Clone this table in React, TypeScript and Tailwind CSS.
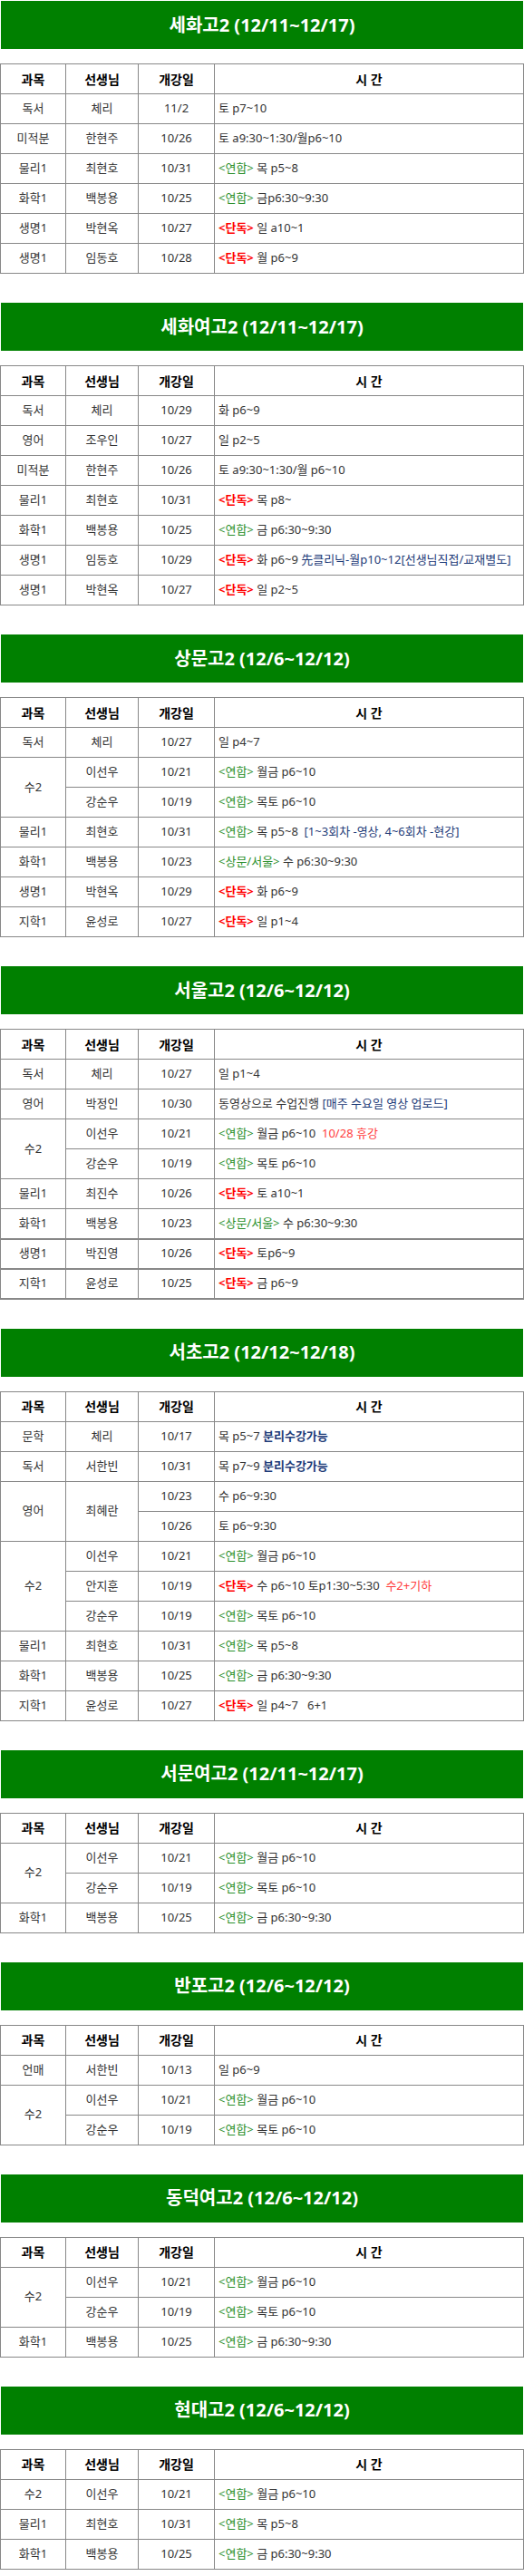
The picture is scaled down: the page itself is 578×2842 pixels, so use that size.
import type { ReactNode } from 'react';

// tags used in the time column
const Y = () => <span className="text-[#2b8f2b]">&lt;연합&gt;</span>;
const D = () => <span className="font-bold text-[#ff0000]">&lt;단독&gt;</span>;
const SM = () => <span className="text-[#2b8f2b]">&lt;상문/서울&gt;</span>;
const N = ({ children, bold }: { children: ReactNode; bold?: boolean }) => (
    <span className={bold ? 'font-bold text-[#1d3b78]' : 'text-[#1d3b78]'}>{children}</span>
);
const R = ({ children }: { children: ReactNode }) => <span className="text-[#ff3c3c]">{children}</span>;

type Row = {
    subj?: string;
    subjSpan?: number;
    teacher?: string;
    teacherSpan?: number;
    date: string;
    time: ReactNode;
    thick?: boolean;
};

type Section = { title: string; rows: Row[] };

const sections: Section[] = [
    {
        title: '세화고2 (12/11~12/17)',
        rows: [
            { subj: '독서', teacher: '체리', date: '11/2', time: '토 p7~10' },
            { subj: '미적분', teacher: '한현주', date: '10/26', time: '토 a9:30~1:30/월p6~10' },
            { subj: '물리1', teacher: '최현호', date: '10/31', time: <><Y /> 목 p5~8</> },
            { subj: '화학1', teacher: '백봉용', date: '10/25', time: <><Y /> 금p6:30~9:30</> },
            { subj: '생명1', teacher: '박현옥', date: '10/27', time: <><D /> 일 a10~1</> },
            { subj: '생명1', teacher: '임동호', date: '10/28', time: <><D /> 월 p6~9</> },
        ],
    },
    {
        title: '세화여고2 (12/11~12/17)',
        rows: [
            { subj: '독서', teacher: '체리', date: '10/29', time: '화 p6~9' },
            { subj: '영어', teacher: '조우인', date: '10/27', time: '일 p2~5' },
            { subj: '미적분', teacher: '한현주', date: '10/26', time: '토 a9:30~1:30/월 p6~10' },
            { subj: '물리1', teacher: '최현호', date: '10/31', time: <><D /> 목 p8~</> },
            { subj: '화학1', teacher: '백봉용', date: '10/25', time: <><Y /> 금 p6:30~9:30</> },
            {
                subj: '생명1',
                teacher: '임동호',
                date: '10/29',
                time: (
                    <>
                        <D /> 화 p6~9 <N>先클리닉-월p10~12[선생님직접/교재별도]</N>
                    </>
                ),
            },
            { subj: '생명1', teacher: '박현옥', date: '10/27', time: <><D /> 일 p2~5</> },
        ],
    },
    {
        title: '상문고2 (12/6~12/12)',
        rows: [
            { subj: '독서', teacher: '체리', date: '10/27', time: '일 p4~7' },
            { subj: '수2', subjSpan: 2, teacher: '이선우', date: '10/21', time: <><Y /> 월금 p6~10</> },
            { teacher: '강순우', date: '10/19', time: <><Y /> 목토 p6~10</> },
            {
                subj: '물리1',
                teacher: '최현호',
                date: '10/31',
                time: (
                    <>
                        <Y /> 목 p5~8 &nbsp;<N>[1~3회차 -영상, 4~6회차 -현강]</N>
                    </>
                ),
            },
            { subj: '화학1', teacher: '백봉용', date: '10/23', time: <><SM /> 수 p6:30~9:30</> },
            { subj: '생명1', teacher: '박현옥', date: '10/29', time: <><D /> 화 p6~9</> },
            { subj: '지학1', teacher: '윤성로', date: '10/27', time: <><D /> 일 p1~4</> },
        ],
    },
    {
        title: '서울고2 (12/6~12/12)',
        rows: [
            { subj: '독서', teacher: '체리', date: '10/27', time: '일 p1~4' },
            {
                subj: '영어',
                teacher: '박정인',
                date: '10/30',
                time: (
                    <>
                        동영상으로 수업진행 <N>[매주 수요일 영상 업로드]</N>
                    </>
                ),
            },
            {
                subj: '수2',
                subjSpan: 2,
                teacher: '이선우',
                date: '10/21',
                time: (
                    <>
                        <Y /> 월금 p6~10 &nbsp;<R>10/28 휴강</R>
                    </>
                ),
            },
            { teacher: '강순우', date: '10/19', time: <><Y /> 목토 p6~10</> },
            { subj: '물리1', teacher: '최진수', date: '10/26', time: <><D /> 토 a10~1</> },
            { subj: '화학1', teacher: '백봉용', date: '10/23', time: <><SM /> 수 p6:30~9:30</>, thick: true },
            { subj: '생명1', teacher: '박진영', date: '10/26', time: <><D /> 토p6~9</>, thick: true },
            { subj: '지학1', teacher: '윤성로', date: '10/25', time: <><D /> 금 p6~9</>, thick: true },
        ],
    },
    {
        title: '서초고2 (12/12~12/18)',
        rows: [
            { subj: '문학', teacher: '체리', date: '10/17', time: <>목 p5~7 <N bold>분리수강가능</N></> },
            { subj: '독서', teacher: '서한빈', date: '10/31', time: <>목 p7~9 <N bold>분리수강가능</N></> },
            { subj: '영어', subjSpan: 2, teacher: '최혜란', teacherSpan: 2, date: '10/23', time: '수 p6~9:30' },
            { date: '10/26', time: '토 p6~9:30' },
            { subj: '수2', subjSpan: 3, teacher: '이선우', date: '10/21', time: <><Y /> 월금 p6~10</> },
            {
                teacher: '안지훈',
                date: '10/19',
                time: (
                    <>
                        <D /> 수 p6~10 토p1:30~5:30 &nbsp;<R>수2+기하</R>
                    </>
                ),
            },
            { teacher: '강순우', date: '10/19', time: <><Y /> 목토 p6~10</> },
            { subj: '물리1', teacher: '최현호', date: '10/31', time: <><Y /> 목 p5~8</> },
            { subj: '화학1', teacher: '백봉용', date: '10/25', time: <><Y /> 금 p6:30~9:30</> },
            { subj: '지학1', teacher: '윤성로', date: '10/27', time: <><D /> 일 p4~7 &nbsp; 6+1</> },
        ],
    },
    {
        title: '서문여고2 (12/11~12/17)',
        rows: [
            { subj: '수2', subjSpan: 2, teacher: '이선우', date: '10/21', time: <><Y /> 월금 p6~10</> },
            { teacher: '강순우', date: '10/19', time: <><Y /> 목토 p6~10</> },
            { subj: '화학1', teacher: '백봉용', date: '10/25', time: <><Y /> 금 p6:30~9:30</> },
        ],
    },
    {
        title: '반포고2 (12/6~12/12)',
        rows: [
            { subj: '언매', teacher: '서한빈', date: '10/13', time: '일 p6~9' },
            { subj: '수2', subjSpan: 2, teacher: '이선우', date: '10/21', time: <><Y /> 월금 p6~10</> },
            { teacher: '강순우', date: '10/19', time: <><Y /> 목토 p6~10</> },
        ],
    },
    {
        title: '동덕여고2 (12/6~12/12)',
        rows: [
            { subj: '수2', subjSpan: 2, teacher: '이선우', date: '10/21', time: <><Y /> 월금 p6~10</> },
            { teacher: '강순우', date: '10/19', time: <><Y /> 목토 p6~10</> },
            { subj: '화학1', teacher: '백봉용', date: '10/25', time: <><Y /> 금 p6:30~9:30</> },
        ],
    },
    {
        title: '현대고2 (12/6~12/12)',
        rows: [
            { subj: '수2', teacher: '이선우', date: '10/21', time: <><Y /> 월금 p6~10</> },
            { subj: '물리1', teacher: '최현호', date: '10/31', time: <><Y /> 목 p5~8</> },
            { subj: '화학1', teacher: '백봉용', date: '10/25', time: <><Y /> 금 p6:30~9:30</> },
        ],
    },
];

const ScheduleTable = ({ section }: { section: Section }) => {
    return (
        <div className="pb-[31px]">
            <div className="mx-px mt-px flex h-[53px] items-center justify-center bg-[#008000] text-[20px] font-bold text-white">
                {section.title}
            </div>
            <table className="mt-4 w-full table-fixed border-collapse border border-[#888] text-[13px] text-[#333]">
                <colgroup>
                    <col className="w-[72px]" />
                    <col className="w-[80px]" />
                    <col className="w-[84px]" />
                    <col />
                </colgroup>
                <thead>
                    <tr className="h-[33px] text-[14px] font-bold text-black">
                        <th className="border border-[#888] p-0">과목</th>
                        <th className="border border-[#888] p-0">선생님</th>
                        <th className="border border-[#888] p-0">개강일</th>
                        <th className="border border-[#888] p-0">시 간</th>
                    </tr>
                </thead>
                <tbody>
                    {section.rows.map((row, i) => (
                        <tr key={i} className={row.thick ? 'h-[33px] border-b-2 border-b-[#888]' : 'h-[33px]'}>
                            {row.subj !== undefined && (
                                <td rowSpan={row.subjSpan} className="border border-[#888] p-0 text-center">
                                    {row.subj}
                                </td>
                            )}
                            {row.teacher !== undefined && (
                                <td rowSpan={row.teacherSpan} className="border border-[#888] p-0 text-center">
                                    {row.teacher}
                                </td>
                            )}
                            <td className="border border-[#888] p-0 text-center">{row.date}</td>
                            <td className="whitespace-nowrap border border-[#888] p-0 pl-1 text-left">{row.time}</td>
                        </tr>
                    ))}
                </tbody>
            </table>
        </div>
    );
};

export default function App() {
    return (
        <div className="w-[578px] bg-white font-['Noto_Sans','Noto_Sans_CJK_KR',sans-serif]">
            {sections.map(s => (
                <ScheduleTable key={s.title} section={s} />
            ))}
        </div>
    );
}
